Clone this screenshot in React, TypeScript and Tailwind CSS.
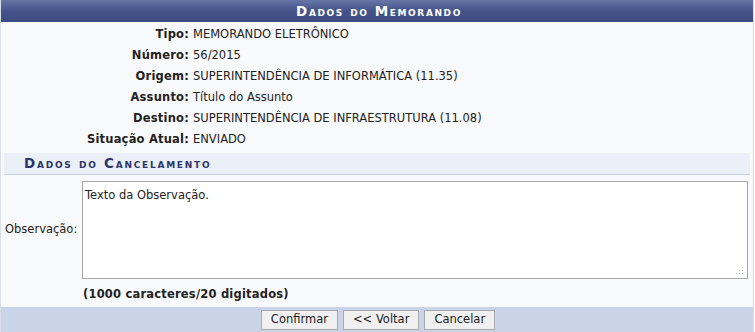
import React from "react";

const rows: [string, string][] = [
  ["Tipo:", "MEMORANDO ELETRÔNICO"],
  ["Número:", "56/2015"],
  ["Origem:", "SUPERINTENDÊNCIA DE INFORMÁTICA (11.35)"],
  ["Assunto:", "Título do Assunto"],
  ["Destino:", "SUPERINTENDÊNCIA DE INFRAESTRUTURA (11.08)"],
  ["Situação Atual:", "ENVIADO"],
];

export default function App() {
  return (
    <div
      className="w-[755px] h-[332px] overflow-hidden bg-white text-[11.5px] text-[#222]"
      style={{ fontFamily: '"DejaVu Sans", Verdana, sans-serif' }}
    >
      <div className="w-[754px] bg-[#f8f9fb] border-l border-r border-[#d9dde6]">
        <div className="h-[22px] flex items-center justify-center pl-[4px] bg-gradient-to-b from-[#6676a6] via-[#44548a] to-[#3c4c80] text-white font-bold text-[13.5px] tracking-[1.6px] [font-variant:small-caps]">
          Dados do Memorando
        </div>
        <div className="pt-[2px] pb-[3px]">
          {rows.map(([l, v]) => (
            <div key={l} className="h-[21px] flex items-center">
              <div className="w-[188px] text-right font-bold tracking-[0.2px]">{l}</div>
              <div className="pl-[4px]">{v}</div>
            </div>
          ))}
        </div>
        <div className="mx-[3px] h-[22px] flex items-center pl-[20px] bg-[#ebf0f8] border-b border-[#c5d0e5] text-[#2e3567] font-bold text-[13.5px] tracking-[1.75px] [font-variant:small-caps]">
          Dados do Cancelamento
        </div>
        <div className="flex items-center pt-[6px]">
          <div className="w-[81px] pl-[4px]">Observação:</div>
          <div className="w-[666px] h-[98px] bg-white border border-[#a6a6a6] relative px-[2px] py-[5px]">
            Texto da Observação.
            <svg className="absolute right-[3px] bottom-[3px]" width="8" height="8" viewBox="0 0 8 8">
              <rect x="6" y="0" width="1" height="1" fill="#b0b0b0" />
              <rect x="3" y="3" width="1" height="1" fill="#b0b0b0" />
              <rect x="6" y="3" width="1" height="1" fill="#b0b0b0" />
              <rect x="0" y="6" width="1" height="1" fill="#b0b0b0" />
              <rect x="3" y="6" width="1" height="1" fill="#b0b0b0" />
              <rect x="6" y="6" width="1" height="1" fill="#b0b0b0" />
            </svg>
          </div>
        </div>
        <div className="h-[28px] flex items-center pl-[82px] pt-[3px] font-bold tracking-[0.2px]">(1000 caracteres/20 digitados)</div>
        <div className="h-[26px] bg-[#c9d4e9] flex items-start pt-[3px] justify-center gap-[5px]">
          <button className="h-[20px] px-[9px] bg-[#f0f0f0] border border-[#a9a9a9] text-[11.5px] text-[#222] ml-[2px]">Confirmar</button>
          <button className="h-[20px] px-[9px] bg-[#f0f0f0] border border-[#a9a9a9] text-[11.5px] text-[#222]">&lt;&lt; Voltar</button>
          <button className="h-[20px] px-[9px] bg-[#f0f0f0] border border-[#a9a9a9] text-[11.5px] text-[#222]">Cancelar</button>
        </div>
      </div>
    </div>
  );
}
